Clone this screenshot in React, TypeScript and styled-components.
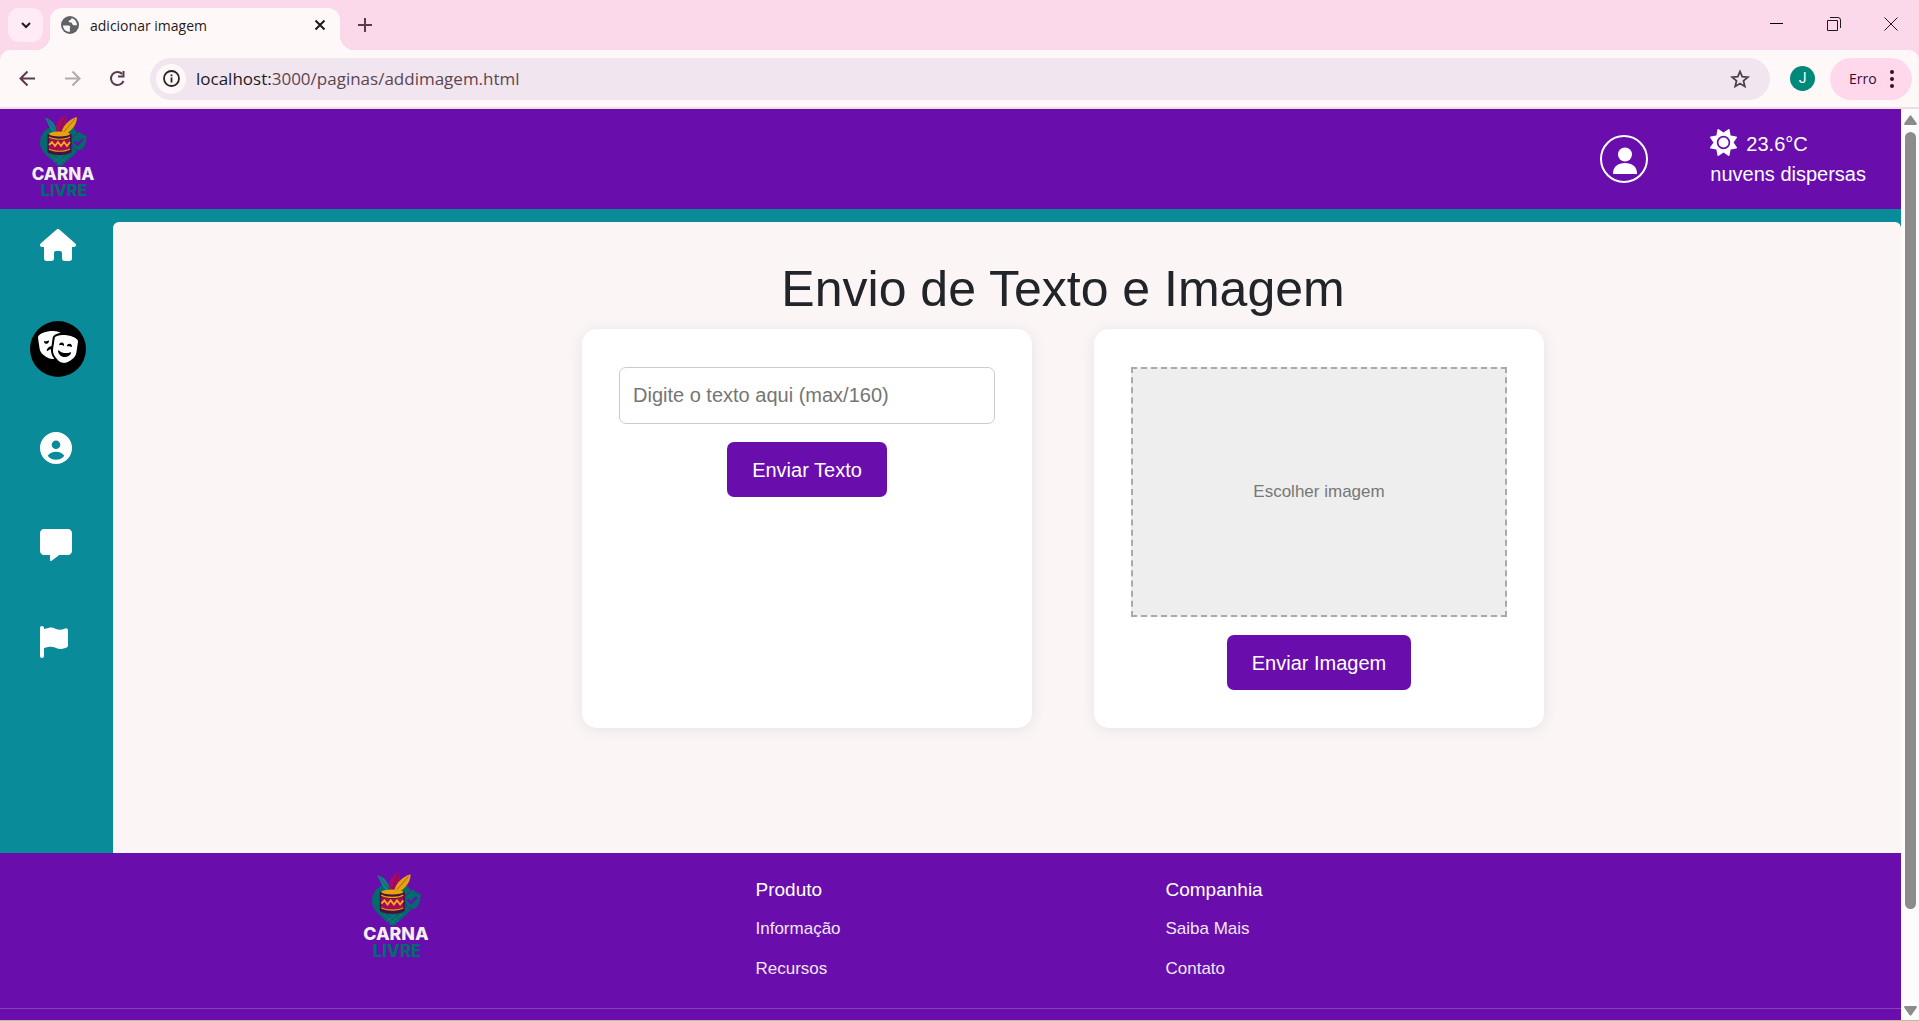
import React, { useState } from "react";
import styled, { createGlobalStyle } from "styled-components";
import { FaFlag, FaHouse, FaMasksTheater, FaMessage, FaSun } from "react-icons/fa6";

const colors = {
  purple: "#6a0dad",
  teal: "#0a8b9a",
  surface: "#fbf5f5",
  frame: "#fbd9ea",
  toolbar: "#fff8f8",
  omnibox: "#f1e5ef",
};

const GlobalStyle = createGlobalStyle`
  *, *::before, *::after { box-sizing: border-box; }
  body { margin: 0; font-family: "Liberation Sans", Arial, sans-serif; }
  button, input { font-family: inherit; }
  button { margin: 0; padding: 0; border: 0; background: none; color: inherit; cursor: pointer; }
  a { color: inherit; text-decoration: none; }
  svg { display: block; flex: none; }
`;

const Window = styled.div`
  display: flex;
  flex-direction: column;
  height: 100vh;
  background: ${colors.frame};
  font-family: "Liberation Sans", Arial, sans-serif;
`;

/* ---------- Browser chrome ---------- */

const TabStrip = styled.div`
  display: flex;
  align-items: center;
  height: 50px;
  padding-left: 8px;
  font-family: "Open Sans", "Noto Sans", sans-serif;
`;

const TabSearch = styled.button`
  display: grid;
  place-items: center;
  width: 35px;
  height: 34px;
  border-radius: 11px;
  background: #ffebf5;
`;

const Tab = styled.div`
  position: relative;
  display: flex;
  align-items: center;
  align-self: flex-end;
  gap: 11px;
  width: 290px;
  height: 42px;
  margin-left: 7px;
  padding: 0 14px 8px 11px;
  border-radius: 12px 12px 0 0;
  background: ${colors.toolbar};
  color: #1f1a1c;
  font-size: 14px;

  &::before,
  &::after {
    content: "";
    position: absolute;
    bottom: 0;
    width: 14px;
    height: 14px;
  }
  &::before {
    right: 100%;
    background: radial-gradient(circle at 0 0, transparent 14px, ${colors.toolbar} 14px);
  }
  &::after {
    left: 100%;
    background: radial-gradient(circle at 100% 0, transparent 14px, ${colors.toolbar} 14px);
  }
`;

const TabTitle = styled.span`
  flex: 1;
  white-space: nowrap;
`;

const NewTab = styled.button`
  margin-left: 18px;
`;

const WindowControls = styled.div`
  display: flex;
  gap: 43px;
  margin-left: auto;
  padding: 0 21px 2px 0;
`;

const Toolbar = styled.div`
  display: flex;
  align-items: center;
  height: 59px;
  padding: 0 7px 0 19px;
  border-bottom: 2px solid #eedfe6;
  border-radius: 10px 10px 0 0;
  background: ${colors.toolbar};
  font-family: "Open Sans", "Noto Sans", sans-serif;
`;

const NavButtons = styled.div`
  display: flex;
  gap: 28px;
  margin-right: 24px;
`;

const Omnibox = styled.div`
  display: flex;
  flex: 1;
  align-items: center;
  height: 42px;
  padding: 0 20px 0 6px;
  border-radius: 21px;
  background: ${colors.omnibox};
`;

const SiteInfo = styled.button`
  display: grid;
  place-items: center;
  width: 30px;
  height: 30px;
  border-radius: 50%;
  background: ${colors.toolbar};
`;

const Address = styled.div`
  flex: 1;
  padding-left: 10px;
  color: #5b4650;
  font-size: 17px;
  line-height: 24px;
`;

const Host = styled.span`
  color: #1f1a1c;
`;

const Avatar = styled.button`
  width: 25px;
  height: 25px;
  margin: 0 15px 0 20px;
  border-radius: 50%;
  background: #00897b;
  color: #ffffff;
  font-family: Roboto, sans-serif;
  font-size: 14px;
  line-height: 25px;
`;

const ErrorPill = styled.button`
  display: flex;
  align-items: center;
  justify-content: space-between;
  width: 82px;
  height: 42px;
  padding: 0 18px 0 19px;
  border-radius: 21px;
  background: #ffd8ec;
  color: #3b0a2a;
  font-size: 14px;
`;

const Viewport = styled.div`
  display: flex;
  flex: 1;
  min-height: 0;
  border-bottom: 1px solid #b5c0a0;
`;

const ScrollTrack = styled.div`
  display: flex;
  flex-direction: column;
  align-items: center;
  width: 18px;
  padding: 6px 0 4px;
  background: #fcfcfc;
`;

const ScrollThumb = styled.div`
  flex: 777;
  width: 11px;
  margin-top: 7px;
  border-radius: 6px;
  background: #8b8b8b;
`;

const ScrollRest = styled.div`
  flex: 97;
`;

/* ---------- Site ---------- */

const Page = styled.div`
  display: flex;
  flex: 1;
  flex-direction: column;
  min-width: 0;
  background: ${colors.teal};
`;

const Header = styled.header`
  display: flex;
  align-items: center;
  height: 100px;
  padding: 0 35px 0 28px;
  background: ${colors.purple};
  color: #ffffff;
`;

const HomeLink = styled.a`
  margin-right: auto;
  padding-bottom: 6px;
`;

const Profile = styled.button`
  display: grid;
  place-items: center;
  width: 48px;
  height: 48px;
  padding: 3px 0 0 1px;
  border: 2px solid #ffffff;
  border-radius: 50%;
`;

const Weather = styled.div`
  margin-left: 62px;
  font-size: 20px;
  line-height: 30px;
`;

const Temperature = styled.div`
  display: flex;
  gap: 9px;
`;

const Body = styled.div`
  display: flex;
  flex: 1;
  padding-top: 13px;
`;

const Sidebar = styled.nav`
  display: flex;
  flex: none;
  flex-direction: column;
  align-items: flex-start;
  gap: 65px;
  width: 113px;
  padding: 7px 0 0 40px;
  color: #ffffff;
`;

const SideLink = styled.a<{ $active?: boolean }>`
  display: grid;
  place-items: center;
  ${({ $active }) =>
    $active &&
    `
    width: 56px;
    height: 56px;
    margin: -5px 0 -10px -10px;
    padding-bottom: 4px;
    border-radius: 50%;
    background: #000000;
  `}
`;

const HouseIcon = styled(FaHouse)`
  width: 36px;
  height: 32px;
`;

const FlagIcon = styled(FaFlag)`
  width: 28px;
  height: 32px;
`;

const Main = styled.main`
  flex: 1;
  padding: 37px 0 0 112px;
  border-radius: 6px 6px 0 0;
  background: ${colors.surface};
`;

const Title = styled.h1`
  margin: 0 0 10px;
  color: #212529;
  font-size: 50px;
  font-weight: 400;
  line-height: 60px;
  text-align: center;
`;

const Cards = styled.div`
  display: flex;
  justify-content: center;
  gap: 62px;
`;

const Card = styled.form`
  display: flex;
  flex-direction: column;
  align-items: center;
  gap: 18px;
  width: 450px;
  padding: 38px 37px;
  border-radius: 15px;
  background: #ffffff;
  box-shadow: 0 2px 16px rgba(0, 0, 0, 0.08);
`;

const TextField = styled.input`
  width: 100%;
  height: 57px;
  padding: 12px 13px;
  border: 1px solid #cccccc;
  border-radius: 7px;
  background: #ffffff;
  color: #212529;
  font-size: 20px;
  line-height: 30px;

  &::placeholder {
    color: #757575;
    opacity: 1;
  }
`;

const SubmitButton = styled.button`
  height: 55px;
  padding: 1px 25px 0;
  border-radius: 7px;
  background: ${colors.purple};
  color: #ffffff;
  font-size: 20px;
`;

const DropZone = styled.label`
  display: grid;
  place-items: center;
  width: 100%;
  height: 250px;
  border: 2px dashed #aaaaaa;
  background: #eeeeee;
  color: #777777;
  font-size: 17px;
  cursor: pointer;
`;

const HiddenFile = styled.input`
  display: none;
`;

const Footer = styled.footer`
  background: ${colors.purple};
  color: #ffffff;
`;

const FooterGrid = styled.div`
  display: grid;
  grid-template-columns: 410px 410px 1fr;
  width: 100%;
  max-width: 1210px;
  height: 155px;
  margin: 0 auto;
`;

const FooterBrand = styled.a`
  padding: 16px 0 0 13px;
`;

const FooterColumn = styled.div`
  padding-top: 25px;
  line-height: 24px;
`;

const FooterTitle = styled.h2`
  margin: 0 0 15px;
  font-size: 19px;
  font-weight: 400;
`;

const FooterList = styled.ul`
  display: grid;
  gap: 16px;
  margin: 0;
  padding: 0;
  list-style: none;
  color: #f0e7f7;
  font-size: 17px;
`;

const FooterBottom = styled.div`
  height: 12px;
  border-top: 1px solid #8841bd;
`;

/* ---------- Drawings ---------- */

function Logo({ width, height }: { width: number; height: number }) {
  return (
    <svg width={width} height={height} viewBox="0 0 72 88" role="img" aria-label="Carna Livre">
      <path d="M12 31C12 22 19 14 28 14H39C46 14 51 20 51 28V34C51 41 38 49 32 55C25 48 12 41 12 31Z" fill="#02696d" />
      <path d="M51 19C54 22 56 23 59 23.500C59 32 57 37 51 39C45 37 43 33 43 26C46 24 49 22 51 19Z" fill="#02696d" stroke={colors.purple} strokeWidth="0.8" />
      <path d="M46.500 29.500L49.500 32.500L55 27" fill="none" stroke={colors.purple} strokeWidth="2.4" />
      <path d="M23 43L35 53M28 42L37 50M41 43L29 53M36 42L26 50" stroke="#268388" strokeWidth="0.6" />
      <path d="M17 6C24 7 28 13 29 22C22 20 21 12 17 6Z" fill="#07868b" />
      <path d="M38 3C40 12 36 20 31 23C25 17 29 6 38 3Z" fill="#a60967" />
      <path d="M49 5C49 14 42 21 33 24C33 15 41 7 49 5Z" fill="#e5a20d" />
      <path d="M20 8L29 21M37 5L31 22M47 7L33 23" stroke="#431241" strokeWidth="0.4" />
      <path d="M19.500 22V40C23 44 40 44 43.500 40V22Z" fill="#431241" />
      <path d="M21 26C27 29 38 29 42 26V37C36 40 27 40 21 37Z" fill="#a60958" />
      <ellipse cx="31.500" cy="22" rx="10.500" ry="2.500" fill="#e5a20d" />
      <path d="M21 25C26 28 37 28 42 25M21 37C26 40 37 40 42 37" fill="none" stroke="#e5a20d" strokeWidth="1.2" />
      <path d="M21 33L24 30L27 34L30 30L33 34L36 30L39 34L42 30" fill="none" stroke="#f0ae13" strokeWidth="1.8" />
      <text x="35" y="68" textAnchor="middle" fontFamily="Inter, sans-serif" fontWeight="800" fontSize="17" fill="#f4efef">
        CARNA
      </text>
      <text x="36" y="84" textAnchor="middle" fontFamily="Inter, sans-serif" fontWeight="800" fontSize="16" fill="#02696d">
        LIVRE
      </text>
    </svg>
  );
}

const GlobeIcon = () => (
  <svg width="18" height="18" viewBox="0 0 18 18">
    <circle cx="9" cy="9" r="9" fill="#5f6368" />
    <path
      d="M2 9.500H7.500C9 9.500 9.500 10.500 9 11.500C8.500 12.500 9 13 9 15.800C5 16 2 13 2 9.500ZM10.500 2.200C10.500 4 9 3.800 8 4.500C7 5.300 8 6.500 9.500 6.500C11.500 6.500 11 8.800 12.500 9.200C14 9.500 14.500 9 16 9.500C16 5.500 13.500 2.800 10.500 2.200Z"
      fill={colors.toolbar}
    />
  </svg>
);

const LineIcon = ({ d, size, color = "#5b3a4c", weight = 2 }: { d: string; size: number; color?: string; weight?: number }) => (
  <svg width={size} height={size} viewBox={`0 0 ${size} ${size}`} fill="none" stroke={color} strokeWidth={weight}>
    <path d={d} />
  </svg>
);

const ReloadIcon = () => (
  <svg width="17" height="17" viewBox="0 0 17 17">
    <path d="M14.500 11A6.500 6.500 0 1 1 13.200 4" fill="none" stroke="#5b3a4c" strokeWidth="2" />
    <path d="M15.500 1V7.500H9V5.500H13.500V1Z" fill="#5b3a4c" />
  </svg>
);

const InfoIcon = () => (
  <svg width="17" height="17" viewBox="0 0 17 17">
    <circle cx="8.500" cy="8.500" r="7.500" fill="none" stroke="#2b2226" strokeWidth="1.800" />
    <path d="M7.600 7.500H9.400V12.500H7.600ZM7.600 4.500H9.400V6.200H7.600Z" fill="#2b2226" />
  </svg>
);

const StarIcon = () => (
  <svg width="20" height="20" viewBox="0 0 20 20" fill="none" stroke="#4f414a" strokeWidth="1.800">
    <path d="M10 2.500L12.200 7.700L17.800 8.200L13.500 11.900L14.800 17.400L10 14.500L5.200 17.400L6.500 11.900L2.200 8.200L7.800 7.700Z" />
  </svg>
);

const DotsIcon = () => (
  <svg width="4" height="18" viewBox="0 0 4 18" fill="#3b0a2a">
    <circle cx="2" cy="2" r="2" />
    <circle cx="2" cy="9" r="2" />
    <circle cx="2" cy="16" r="2" />
  </svg>
);

const ScrollArrow = ({ down }: { down?: boolean }) => (
  <svg width="13" height="10" viewBox="0 0 13 10" fill="#8b8b8b">
    <path d={down ? "M1 0H12Q13.500 .5 12.500 2L7.500 9Q6.500 10.500 5.500 9L.5 2Q-.5 .5 1 0Z" : "M1 10H12Q13.500 9.500 12.500 8L7.500 1Q6.500 -.5 5.500 1L.5 8Q-.5 9.500 1 10Z"} />
  </svg>
);

const PersonIcon = () => (
  <svg width="24" height="28" viewBox="0 0 24 28" fill="#ffffff">
    <circle cx="12" cy="7.500" r="7" />
    <path d="M0 26.500C0 19.500 5 16 12 16S24 19.500 24 26.500V27H0Z" />
  </svg>
);

const AccountIcon = () => (
  <svg width="32" height="32" viewBox="0 0 32 32" fill="#ffffff">
    <path
      fillRule="evenodd"
      d="M16 0A16 16 0 1 0 16 32A16 16 0 1 0 16 0ZM16 8.400A4.300 4.300 0 1 1 16 17A4.300 4.300 0 1 1 16 8.400ZM7.700 23.800C9.500 21 12.500 19.800 16 19.800S22.500 21 24.300 23.800C22.500 26.300 19.500 27.800 16 27.800S9.500 26.300 7.700 23.800Z"
    />
  </svg>
);

/* ---------- App ---------- */

const footerColumns = [
  { title: "Produto", links: ["Informação", "Recursos"] },
  { title: "Companhia", links: ["Saiba Mais", "Contato"] },
];

function BrowserChrome() {
  return (
    <>
      <TabStrip>
        <TabSearch aria-label="Pesquisar guias">
          <LineIcon size={12} d="M2 4L6 8L10 4" color="#1f1a1c" />
        </TabSearch>
        <Tab>
          <GlobeIcon />
          <TabTitle>adicionar imagem</TabTitle>
          <button aria-label="Fechar guia">
            <LineIcon size={12} d="M1.500 1.500L10.500 10.500M10.500 1.500L1.500 10.500" color="#1f1a1c" />
          </button>
        </Tab>
        <NewTab aria-label="Nova guia">
          <LineIcon size={14} d="M7 0V14M0 7H14" />
        </NewTab>
        <WindowControls>
          <button aria-label="Minimizar">
            <LineIcon size={14} d="M0 6.5H13" color="#000000" weight={1} />
          </button>
          <button aria-label="Restaurar">
            <LineIcon size={14} d="M.5 3.500H10.500V13.500H.5ZM3 .5H11Q13.500 .5 13.500 3V11" color="#1f1a1c" weight={1} />
          </button>
          <button aria-label="Fechar">
            <LineIcon size={14} d="M.5 .5L13.500 13.500M13.500 .5L.5 13.500" color="#1f1a1c" weight={1} />
          </button>
        </WindowControls>
      </TabStrip>
      <Toolbar>
        <NavButtons>
          <button aria-label="Voltar">
            <LineIcon size={17} d="M16 8.500H2M8.500 1.500L1.500 8.500L8.500 15.500" />
          </button>
          <button aria-label="Avançar">
            <LineIcon size={17} d="M1 8.500H15M8.500 1.500L15.500 8.500L8.500 15.500" color="#b3a9ae" />
          </button>
          <button aria-label="Recarregar">
            <ReloadIcon />
          </button>
        </NavButtons>
        <Omnibox>
          <SiteInfo aria-label="Informações do site">
            <InfoIcon />
          </SiteInfo>
          <Address>
            <Host>localhost:</Host>3000/paginas/addimagem.html
          </Address>
          <button aria-label="Favoritar">
            <StarIcon />
          </button>
        </Omnibox>
        <Avatar>J</Avatar>
        <ErrorPill>
          Erro
          <DotsIcon />
        </ErrorPill>
      </Toolbar>
    </>
  );
}

export default function App() {
  const [text, setText] = useState("");
  const [fileName, setFileName] = useState("");
  const stay = (event: React.FormEvent) => event.preventDefault();

  return (
    <Window>
      <GlobalStyle />
      <BrowserChrome />
      <Viewport>
        <Page>
          <Header>
            <HomeLink href="#">
              <Logo width={72} height={88} />
            </HomeLink>
            <Profile aria-label="Perfil">
              <PersonIcon />
            </Profile>
            <Weather>
              <Temperature>
                <FaSun size={27} />
                <span>23.6°C</span>
              </Temperature>
              <div>nuvens dispersas</div>
            </Weather>
          </Header>
          <Body>
            <Sidebar>
              <SideLink href="#" aria-label="Início">
                <HouseIcon />
              </SideLink>
              <SideLink href="#" aria-label="Carnaval" $active>
                <FaMasksTheater size={40} />
              </SideLink>
              <SideLink href="#" aria-label="Conta">
                <AccountIcon />
              </SideLink>
              <SideLink href="#" aria-label="Mensagens">
                <FaMessage size={32} />
              </SideLink>
              <SideLink href="#" aria-label="Denúncias">
                <FlagIcon />
              </SideLink>
            </Sidebar>
            <Main>
              <Title>Envio de Texto e Imagem</Title>
              <Cards>
                <Card onSubmit={stay}>
                  <TextField
                    aria-label="Texto"
                    placeholder="Digite o texto aqui (max/160)"
                    maxLength={160}
                    value={text}
                    onChange={(event) => setText(event.target.value)}
                  />
                  <SubmitButton type="submit">Enviar Texto</SubmitButton>
                </Card>
                <Card onSubmit={stay}>
                  <DropZone htmlFor="imagem">{fileName || "Escolher imagem"}</DropZone>
                  <HiddenFile
                    id="imagem"
                    type="file"
                    accept="image/*"
                    onChange={(event) => setFileName(event.target.files?.[0]?.name ?? "")}
                  />
                  <SubmitButton type="submit">Enviar Imagem</SubmitButton>
                </Card>
              </Cards>
            </Main>
          </Body>
          <Footer>
            <FooterGrid>
              <FooterBrand href="#">
                <Logo width={76} height={92} />
              </FooterBrand>
              {footerColumns.map((column) => (
                <FooterColumn key={column.title}>
                  <FooterTitle>{column.title}</FooterTitle>
                  <FooterList>
                    {column.links.map((link) => (
                      <li key={link}>
                        <a href="#">{link}</a>
                      </li>
                    ))}
                  </FooterList>
                </FooterColumn>
              ))}
            </FooterGrid>
            <FooterBottom />
          </Footer>
        </Page>
        <ScrollTrack>
          <ScrollArrow />
          <ScrollThumb />
          <ScrollRest />
          <ScrollArrow down />
        </ScrollTrack>
      </Viewport>
    </Window>
  );
}
